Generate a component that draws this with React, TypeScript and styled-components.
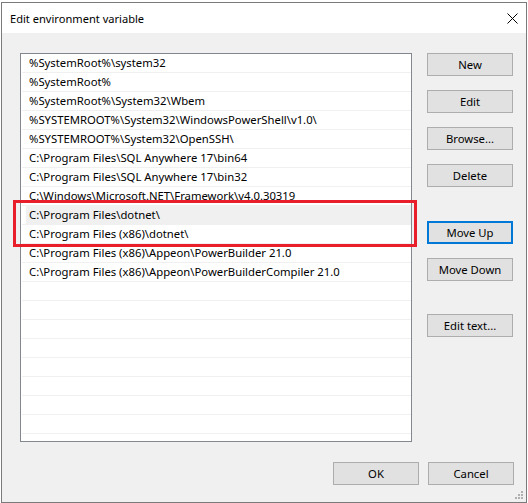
import styled, { createGlobalStyle } from "styled-components";

const GlobalStyle = createGlobalStyle`
  body {
    margin: 0;
    background: #ffffff;
    font-family: "Noto Sans", "Liberation Sans", sans-serif;
    font-size: 11px;
    color: #000000;
  }
`;

const Window = styled.div`
  position: relative;
  margin: 2px 0 0 1px;
  width: 526px;
  height: 501px;
  box-sizing: border-box;
  border: 1px solid #7a7a7a;
  background: #f0f0f0;
  display: flex;
  flex-direction: column;
`;

const TitleBar = styled.div`
  height: 30px;
  flex-shrink: 0;
  background: #ffffff;
  display: flex;
  align-items: center;
  justify-content: space-between;
  padding: 0 8px 0 8px;
`;

const Title = styled.span`
  font-size: 11.1px;
`;

const Body = styled.div`
  flex: 1;
  padding: 20px 12px 0 18px;
  display: flex;
  flex-direction: column;
`;

const Main = styled.div`
  display: flex;
  gap: 15px;
`;

const ListWrap = styled.div`
  position: relative;
`;

const ListBox = styled.div`
  width: 392px;
  height: 389px;
  box-sizing: border-box;
  border: 1px solid #828790;
  background: #ffffff;
  overflow: hidden;
`;

const Row = styled.div<{ $selected?: boolean }>`
  height: 19px;
  box-sizing: border-box;
  border-bottom: 1px solid #f0f0f0;
  margin-left: 1px;
  padding-left: 7px;
  line-height: 18px;
  white-space: nowrap;
  font-size: 11.3px;
  background: ${(p) =>
    p.$selected
      ? "linear-gradient(to right, transparent 4px, #f0f0f0 4px)"
      : "transparent"};
`;

const Marker = styled.div`
  position: absolute;
  left: -7px;
  top: 147px;
  width: 404px;
  height: 47px;
  box-sizing: border-box;
  border: 3px solid #e81f2a;
  pointer-events: none;
`;

const ButtonCol = styled.div`
  display: flex;
  flex-direction: column;
  gap: 14px;
  width: 86px;
`;

const Button = styled.button<{ $focused?: boolean; $spaced?: number }>`
  width: 86px;
  height: 23px;
  box-sizing: border-box;
  border: ${(p) => (p.$focused ? "2px solid #0078d7" : "1px solid #adadad")};
  background: #e1e1e1;
  font-family: "Noto Sans", "Liberation Sans", sans-serif;
  font-size: 11.3px;
  color: #000000;
  padding: 0;
  margin-top: ${(p) => p.$spaced ?? 0}px;
`;

const Footer = styled.div`
  display: flex;
  justify-content: flex-end;
  gap: 9px;
  margin-top: 20px;
`;

const Grip = styled.svg`
  position: absolute;
  right: 2px;
  bottom: 2px;
`;

const paths = [
  "%SystemRoot%\\system32",
  "%SystemRoot%",
  "%SystemRoot%\\System32\\Wbem",
  "%SYSTEMROOT%\\System32\\WindowsPowerShell\\v1.0\\",
  "%SYSTEMROOT%\\System32\\OpenSSH\\",
  "C:\\Program Files\\SQL Anywhere 17\\bin64",
  "C:\\Program Files\\SQL Anywhere 17\\bin32",
  "C:\\Windows\\Microsoft.NET\\Framework\\v4.0.30319",
  "C:\\Program Files\\dotnet\\",
  "C:\\Program Files (x86)\\dotnet\\",
  "C:\\Program Files (x86)\\Appeon\\PowerBuilder 21.0",
  "C:\\Program Files (x86)\\Appeon\\PowerBuilderCompiler 21.0",
];

export default function App() {
  const rows = [...paths, ...Array(9).fill("")];

  return (
    <>
      <GlobalStyle />
      <Window>
        <TitleBar>
          <Title>Edit environment variable</Title>
          <svg width="11" height="11" viewBox="0 0 11 11">
            <path d="M0.5 0.5 L10.5 10.5 M10.5 0.5 L0.5 10.5" stroke="#000" strokeWidth="1" />
          </svg>
        </TitleBar>
        <Body>
          <Main>
            <ListWrap>
              <ListBox>
                {rows.map((v, i) => (
                  <Row key={i} $selected={i === 8}>
                    {v}
                  </Row>
                ))}
              </ListBox>
              <Marker />
            </ListWrap>
            <ButtonCol>
              <Button>New</Button>
              <Button>Edit</Button>
              <Button>Browse...</Button>
              <Button>Delete</Button>
              <Button $focused $spaced={20}>Move Up</Button>
              <Button>Move Down</Button>
              <Button $spaced={19}>Edit text...</Button>
            </ButtonCol>
          </Main>
          <Footer>
            <Button>OK</Button>
            <Button>Cancel</Button>
          </Footer>
        </Body>
        <Grip width="9" height="9" viewBox="0 0 9 9">
          <rect x="6" y="0" width="2" height="2" fill="#b0b0b0" />
          <rect x="3" y="3" width="2" height="2" fill="#b0b0b0" />
          <rect x="6" y="3" width="2" height="2" fill="#b0b0b0" />
          <rect x="0" y="6" width="2" height="2" fill="#b0b0b0" />
          <rect x="3" y="6" width="2" height="2" fill="#b0b0b0" />
          <rect x="6" y="6" width="2" height="2" fill="#b0b0b0" />
        </Grip>
      </Window>
    </>
  );
}
